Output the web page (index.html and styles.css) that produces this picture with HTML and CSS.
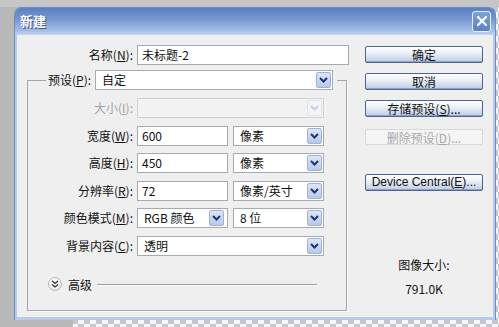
FILE: index.html
```html
<!DOCTYPE html>
<html lang="zh-CN">
<head>
  <meta charset="UTF-8">
  <title>新建</title>
  <link rel="stylesheet" href="styles.css">
</head>
<body>

<div class="window">
  <div class="titlebar">
    <span class="title">新建</span>
    <span class="close">
      <svg width="12" height="12" viewBox="0 0 12 12"><path d="M2 2 L10 10 M10 2 L2 10" stroke="#fff" stroke-width="2.2" stroke-linecap="round"/></svg>
    </span>
  </div>

  <div class="client">
    <div class="form">
      <div class="name-row">
        <label>名称(<u>N</u>):</label>
        <div class="field name-field">未标题-2</div>
      </div>

      <fieldset class="group">
        <legend>
          <label>预设(<u>P</u>):</label>
          <div class="field select preset">自定
            <span class="arrow"><svg width="9" height="6" viewBox="0 0 9 6"><path d="M1 1 L4.5 4.5 L8 1" fill="none" stroke="#1c3577" stroke-width="2"/></svg></span>
          </div>
        </legend>

        <div class="rows">
          <label class="off">大小(<u>I</u>):</label>
          <div class="field select disabled wide">
            <span class="arrow"><svg width="9" height="6" viewBox="0 0 9 6"><path d="M1 1 L4.5 4.5 L8 1" fill="none" stroke="#c3cfe3" stroke-width="2"/></svg></span>
          </div>

          <label>宽度(<u>W</u>):</label>
          <div class="pair">
            <div class="field num">600</div>
            <div class="field select unit">像素
              <span class="arrow"><svg width="9" height="6" viewBox="0 0 9 6"><path d="M1 1 L4.5 4.5 L8 1" fill="none" stroke="#1c3577" stroke-width="2"/></svg></span>
            </div>
          </div>

          <label>高度(<u>H</u>):</label>
          <div class="pair">
            <div class="field num">450</div>
            <div class="field select unit">像素
              <span class="arrow"><svg width="9" height="6" viewBox="0 0 9 6"><path d="M1 1 L4.5 4.5 L8 1" fill="none" stroke="#1c3577" stroke-width="2"/></svg></span>
            </div>
          </div>

          <label>分辨率(<u>R</u>):</label>
          <div class="pair">
            <div class="field num">72</div>
            <div class="field select unit">像素/英寸
              <span class="arrow"><svg width="9" height="6" viewBox="0 0 9 6"><path d="M1 1 L4.5 4.5 L8 1" fill="none" stroke="#1c3577" stroke-width="2"/></svg></span>
            </div>
          </div>

          <label>颜色模式(<u>M</u>):</label>
          <div class="pair">
            <div class="field select num">RGB 颜色
              <span class="arrow"><svg width="9" height="6" viewBox="0 0 9 6"><path d="M1 1 L4.5 4.5 L8 1" fill="none" stroke="#1c3577" stroke-width="2"/></svg></span>
            </div>
            <div class="field select unit">8 位
              <span class="arrow"><svg width="9" height="6" viewBox="0 0 9 6"><path d="M1 1 L4.5 4.5 L8 1" fill="none" stroke="#1c3577" stroke-width="2"/></svg></span>
            </div>
          </div>

          <label>背景内容(<u>C</u>):</label>
          <div class="field select wide">透明
            <span class="arrow"><svg width="9" height="6" viewBox="0 0 9 6"><path d="M1 1 L4.5 4.5 L8 1" fill="none" stroke="#1c3577" stroke-width="2"/></svg></span>
          </div>
        </div>

        <div class="advanced">
          <span class="toggle"><svg width="8" height="8" viewBox="0 0 8 8"><path d="M1 1 L4 3.5 L7 1 M1 4.5 L4 7 L7 4.5" fill="none" stroke="#333" stroke-width="1.3"/></svg></span>
          <span class="adv-text">高级</span>
          <span class="rule"></span>
        </div>
      </fieldset>
    </div>

    <div class="side">
      <div class="btn first">确定</div>
      <div class="btn">取消</div>
      <div class="btn">存储预设(<u>S</u>)...</div>
      <div class="btn disabled">删除预设(<u>D</u>)...</div>
      <div class="btn device">Device Central(<u>E</u>)...</div>
      <div class="size-info">
        <div>图像大小:</div>
        <div>791.0K</div>
      </div>
    </div>
  </div>
</div>

</body>
</html>
```

FILE: styles.css
```css
body {
  margin: 0;
  width: 499px;
  height: 327px;
  overflow: hidden;
  padding: 7px 0 0 14px;
  box-sizing: border-box;
  font-family: "Noto Sans CJK SC", "Liberation Sans", sans-serif;
  font-size: 12px;
  color: #111;
  background:
    linear-gradient(#c6c6c6, #c6c6c6) 0 0 / 100% 7px no-repeat,
    linear-gradient(#b9b9b9, #b9b9b9) 0 0 / 73px 100% no-repeat,
    repeating-conic-gradient(#c4c8ce 0 25%, #f4f6f9 0 50%) 0 0 / 12px 12px;
}
.window {
  width: 482px;
  height: 313px;
  box-sizing: border-box;
  border: 1px solid #6a8dca;
  border-bottom: none;
  border-radius: 7px 7px 0 0;
  background: #b4cbee;
  padding: 0 2px 3px 2px;
  display: flex;
  flex-direction: column;
}
.titlebar {
  height: 27px;
  margin: 0 -2px;
  border-radius: 6px 6px 0 0;
  background: linear-gradient(#5b7fc1, #7596d0 40%, #a6bfe7 85%, #c2d4ef);
  display: flex;
  align-items: center;
  justify-content: space-between;
  padding: 0 4px 0 5px;
}
.title {
  color: #fff;
  font-weight: bold;
  font-size: 13px;
  text-shadow: 1px 1px 0 #3b5a95;
  margin-top: -2px;
}
.close {
  width: 17px;
  height: 19px;
  border: 1px solid #e6eefa;
  border-radius: 3px;
  background: linear-gradient(#7fa2dc, #5b81c5);
  display: flex;
  align-items: center;
  justify-content: center;
  margin-top: -1px;
}
.client {
  flex: 1;
  background: #efefef;
  display: flex;
  padding-top: 10px;
}
.form {
  width: 332px;
}
label {
  text-align: right;
  white-space: nowrap;
  line-height: 20px;
}
.off {
  color: #a3a3a3;
}
.name-row {
  display: grid;
  grid-template-columns: 116px 212px;
  column-gap: 4px;
}
.field {
  height: 20px;
  box-sizing: border-box;
  border: 1px solid #a7abb0;
  background: #fff;
  line-height: 18px;
  padding-left: 4px;
  position: relative;
}
.select {
  padding-left: 6px;
}
.arrow {
  position: absolute;
  right: 1px;
  top: 1px;
  width: 15px;
  height: 16px;
  box-sizing: border-box;
  border: 1px solid #9fb3d6;
  border-radius: 2px;
  background: linear-gradient(#dce6f6, #b7c9e9);
  display: flex;
  align-items: center;
  justify-content: center;
}
.disabled {
  background: #f2f2f2;
  border-color: #d2d2d2;
}
.disabled .arrow {
  background: #f2f4f8;
  border-color: #e0e4ea;
}
.group {
  margin: 5px 0 0 10px;
  width: 320px;
  box-sizing: border-box;
  border: 1px solid #a6a6a6;
  box-shadow: 1px 1px 0 #fff;
  padding: 8px 0 17px 0;
}
.group legend {
  display: flex;
  gap: 4px;
  margin-left: 18px;
  padding: 0 4px 0 2px;
}
.preset {
  width: 238px;
}
.rows {
  display: grid;
  grid-template-columns: 105px 187px;
  column-gap: 4px;
  row-gap: 7.5px;
}
.pair {
  display: flex;
  gap: 5px;
}
.num {
  width: 91px;
}
.unit {
  width: 91px;
}
.num.select .arrow {
  right: 3px;
}
.advanced {
  display: flex;
  align-items: center;
  margin: 20px 0 0 20px;
}
.toggle {
  width: 14px;
  height: 14px;
  border-radius: 50%;
  border: 1px solid #b8b8b8;
  background: radial-gradient(circle at 40% 35%, #fff, #e2e2e2);
  display: flex;
  align-items: center;
  justify-content: center;
  box-sizing: border-box;
}
.adv-text {
  margin-left: 6px;
}
.rule {
  width: 220px;
  height: 1px;
  background: #9a9a9a;
  box-shadow: 0 1px 0 #fff;
  margin-left: 5px;
}
.side {
  margin-left: 16px;
  width: 118px;
  display: flex;
  flex-direction: column;
}
.btn {
  height: 17px;
  box-sizing: border-box;
  border: 1px solid #4c6592;
  border-radius: 2px;
  background: linear-gradient(#ffffff, #e9eef6 45%, #bccbe3);
  box-shadow: inset 0 -1px 0 #8fa3c6;
  text-align: center;
  line-height: 15px;
  margin-top: 10px;
}
.btn.first {
  margin-top: 1px;
}
.btn.disabled {
  border-color: #d8d8d8;
  background: #f5f5f5;
  box-shadow: none;
  color: #a8a8a8;
  margin-top: 12px;
  height: 16px;
}
.btn.device {
  margin-top: 29px;
  font-family: "Liberation Sans", sans-serif;
}
.size-info {
  margin-top: 62px;
  text-align: center;
  line-height: 24px;
}
```
